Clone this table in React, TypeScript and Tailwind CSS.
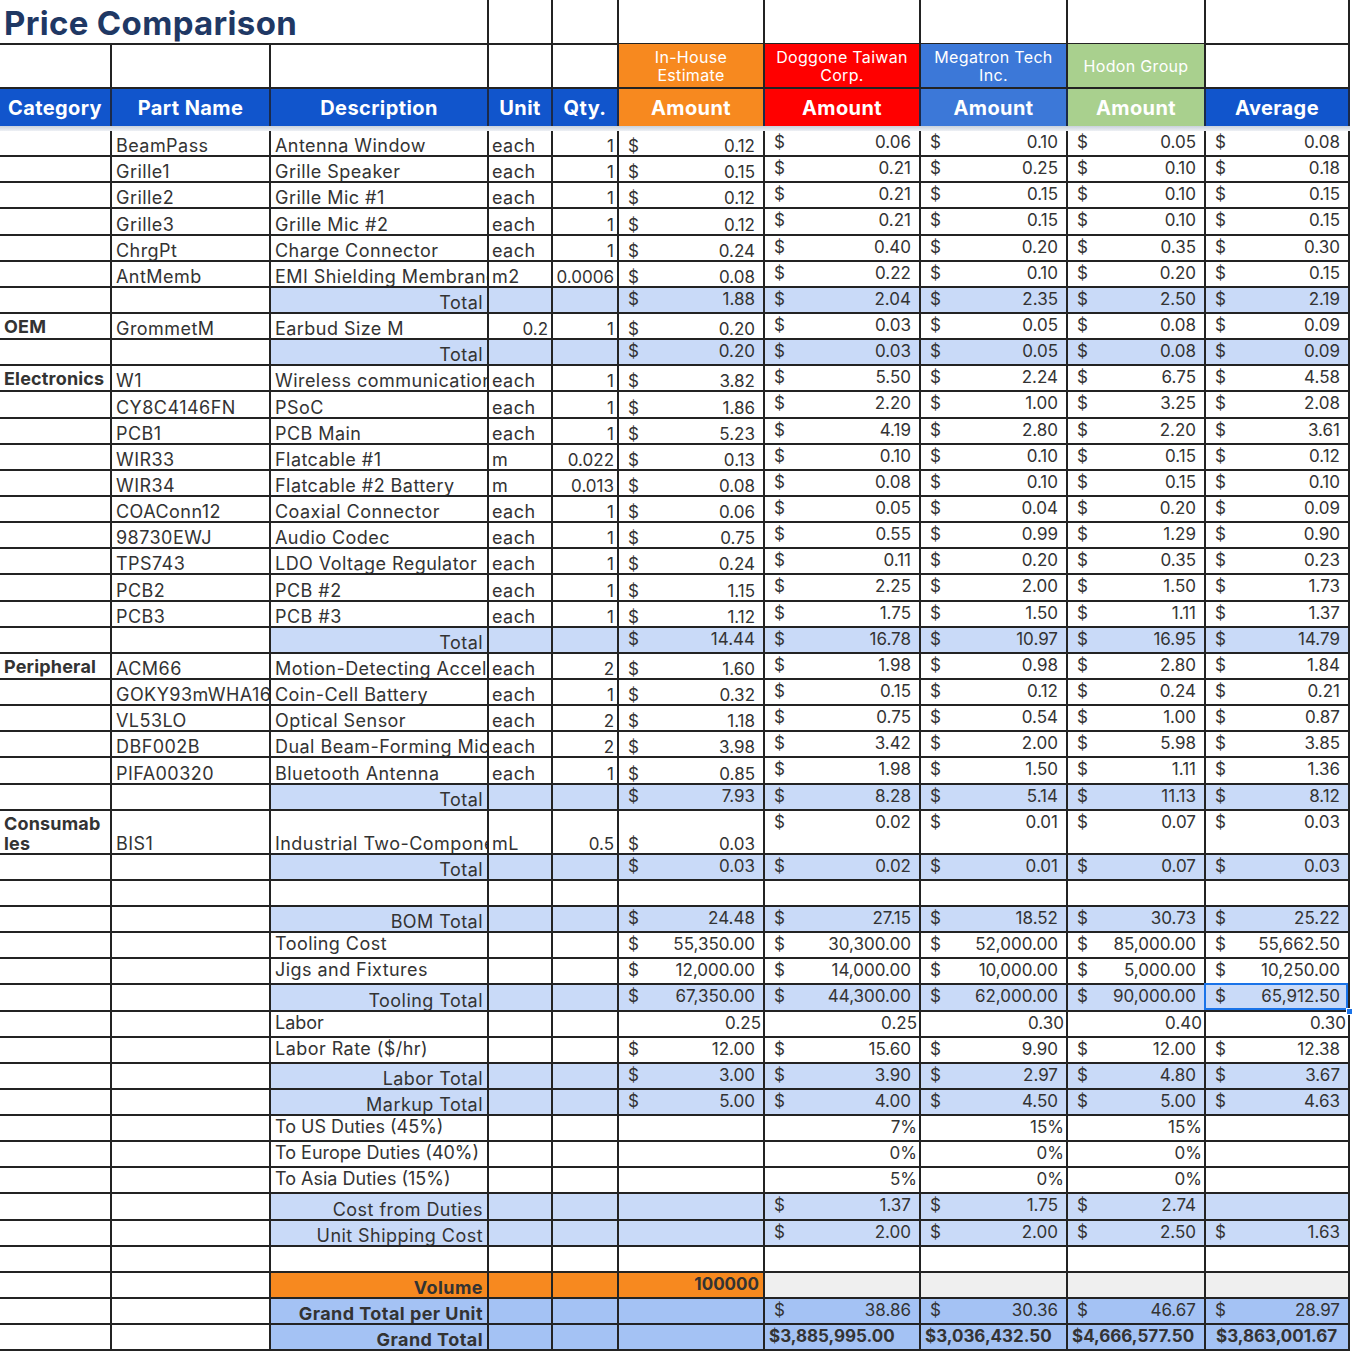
import React from 'react';

const GRID =
  'grid grid-cols-[112px_159px_218px_64px_66px_146px_156px_147px_138px_144px] w-[1350px]';

const B = 'border-r-2 border-b-2 border-[#232323]';
const BASE = 'leading-[18px] text-[#333]';
const TX = 'text-[18px] tracking-[0.025em]';
const TX0 = 'text-[18px] tracking-[0em]';
const NUM = 'text-[17px]';
const TOP = 'items-start pt-[2px]';
const BOT = 'items-end pb-0';

const LIGHT = 'bg-[#c9daf8]';
const GT = 'bg-[#a4c2f4]';
const ORANGE = 'bg-[#f7891f]';

type Row =
  | { k: 'data'; cat?: string; part: string; desc: string; unit: string; unitRight?: boolean; qty: string; v: string[]; tall?: boolean }
  | { k: 'total'; label: string; v: string[] }
  | { k: 'blank' }
  | { k: 'plain'; label: string; v: string[] }
  | { k: 'num'; label: string; v: string[] }
  | { k: 'volume' }
  | { k: 'gtu'; v: string[] }
  | { k: 'gt'; v: string[] };

const rows: Row[] = [
  { k: 'data', part: 'BeamPass', desc: 'Antenna Window', unit: 'each', qty: '1', v: ['0.12', '0.06', '0.10', '0.05', '0.08'] },
  { k: 'data', part: 'Grille1', desc: 'Grille Speaker', unit: 'each', qty: '1', v: ['0.15', '0.21', '0.25', '0.10', '0.18'] },
  { k: 'data', part: 'Grille2', desc: 'Grille Mic #1', unit: 'each', qty: '1', v: ['0.12', '0.21', '0.15', '0.10', '0.15'] },
  { k: 'data', part: 'Grille3', desc: 'Grille Mic #2', unit: 'each', qty: '1', v: ['0.12', '0.21', '0.15', '0.10', '0.15'] },
  { k: 'data', part: 'ChrgPt', desc: 'Charge Connector', unit: 'each', qty: '1', v: ['0.24', '0.40', '0.20', '0.35', '0.30'] },
  { k: 'data', part: 'AntMemb', desc: 'EMI Shielding Membrane', unit: 'm2', qty: '0.0006', v: ['0.08', '0.22', '0.10', '0.20', '0.15'] },
  { k: 'total', label: 'Total', v: ['1.88', '2.04', '2.35', '2.50', '2.19'] },
  { k: 'data', cat: 'OEM', part: 'GrommetM', desc: 'Earbud Size M', unit: '0.2', unitRight: true, qty: '1', v: ['0.20', '0.03', '0.05', '0.08', '0.09'] },
  { k: 'total', label: 'Total', v: ['0.20', '0.03', '0.05', '0.08', '0.09'] },
  { k: 'data', cat: 'Electronics', part: 'W1', desc: 'Wireless communication', unit: 'each', qty: '1', v: ['3.82', '5.50', '2.24', '6.75', '4.58'] },
  { k: 'data', part: 'CY8C4146FN', desc: 'PSoC', unit: 'each', qty: '1', v: ['1.86', '2.20', '1.00', '3.25', '2.08'] },
  { k: 'data', part: 'PCB1', desc: 'PCB Main', unit: 'each', qty: '1', v: ['5.23', '4.19', '2.80', '2.20', '3.61'] },
  { k: 'data', part: 'WIR33', desc: 'Flatcable #1', unit: 'm', qty: '0.022', v: ['0.13', '0.10', '0.10', '0.15', '0.12'] },
  { k: 'data', part: 'WIR34', desc: 'Flatcable #2 Battery', unit: 'm', qty: '0.013', v: ['0.08', '0.08', '0.10', '0.15', '0.10'] },
  { k: 'data', part: 'COAConn12', desc: 'Coaxial Connector', unit: 'each', qty: '1', v: ['0.06', '0.05', '0.04', '0.20', '0.09'] },
  { k: 'data', part: '98730EWJ', desc: 'Audio Codec', unit: 'each', qty: '1', v: ['0.75', '0.55', '0.99', '1.29', '0.90'] },
  { k: 'data', part: 'TPS743', desc: 'LDO Voltage Regulator', unit: 'each', qty: '1', v: ['0.24', '0.11', '0.20', '0.35', '0.23'] },
  { k: 'data', part: 'PCB2', desc: 'PCB #2', unit: 'each', qty: '1', v: ['1.15', '2.25', '2.00', '1.50', '1.73'] },
  { k: 'data', part: 'PCB3', desc: 'PCB #3', unit: 'each', qty: '1', v: ['1.12', '1.75', '1.50', '1.11', '1.37'] },
  { k: 'total', label: 'Total', v: ['14.44', '16.78', '10.97', '16.95', '14.79'] },
  { k: 'data', cat: 'Peripheral', part: 'ACM66', desc: 'Motion-Detecting Accelerometer', unit: 'each', qty: '2', v: ['1.60', '1.98', '0.98', '2.80', '1.84'] },
  { k: 'data', part: 'GOKY93mWHA16C', desc: 'Coin-Cell Battery', unit: 'each', qty: '1', v: ['0.32', '0.15', '0.12', '0.24', '0.21'] },
  { k: 'data', part: 'VL53LO', desc: 'Optical Sensor', unit: 'each', qty: '2', v: ['1.18', '0.75', '0.54', '1.00', '0.87'] },
  { k: 'data', part: 'DBF002B', desc: 'Dual Beam-Forming Mic', unit: 'each', qty: '2', v: ['3.98', '3.42', '2.00', '5.98', '3.85'] },
  { k: 'data', part: 'PIFA00320', desc: 'Bluetooth Antenna', unit: 'each', qty: '1', v: ['0.85', '1.98', '1.50', '1.11', '1.36'] },
  { k: 'total', label: 'Total', v: ['7.93', '8.28', '5.14', '11.13', '8.12'] },
  { k: 'data', cat: 'Consumables', part: 'BIS1', desc: 'Industrial Two-Component Adhesive', unit: 'mL', qty: '0.5', v: ['0.03', '0.02', '0.01', '0.07', '0.03'], tall: true },
  { k: 'total', label: 'Total', v: ['0.03', '0.02', '0.01', '0.07', '0.03'] },
  { k: 'blank' },
  { k: 'total', label: 'BOM Total', v: ['24.48', '27.15', '18.52', '30.73', '25.22'] },
  { k: 'plain', label: 'Tooling Cost', v: ['55,350.00', '30,300.00', '52,000.00', '85,000.00', '55,662.50'] },
  { k: 'plain', label: 'Jigs and Fixtures', v: ['12,000.00', '14,000.00', '10,000.00', '5,000.00', '10,250.00'] },
  { k: 'total', label: 'Tooling Total', v: ['67,350.00', '44,300.00', '62,000.00', '90,000.00', '65,912.50'] },
  { k: 'num', label: 'Labor', v: ['0.25', '0.25', '0.30', '0.40', '0.30'] },
  { k: 'plain', label: 'Labor Rate ($/hr)', v: ['12.00', '15.60', '9.90', '12.00', '12.38'] },
  { k: 'total', label: 'Labor Total', v: ['3.00', '3.90', '2.97', '4.80', '3.67'] },
  { k: 'total', label: 'Markup Total', v: ['5.00', '4.00', '4.50', '5.00', '4.63'] },
  { k: 'num', label: 'To US Duties (45%)', v: ['', '7%', '15%', '15%', ''] },
  { k: 'num', label: 'To Europe Duties (40%)', v: ['', '0%', '0%', '0%', ''] },
  { k: 'num', label: 'To Asia Duties (15%)', v: ['', '5%', '0%', '0%', ''] },
  { k: 'total', label: 'Cost from Duties', v: ['', '1.37', '1.75', '2.74', ''] },
  { k: 'total', label: 'Unit Shipping Cost', v: ['', '2.00', '2.00', '2.50', '1.63'] },
  { k: 'blank' },
  { k: 'volume' },
  { k: 'gtu', v: ['', '38.86', '30.36', '46.67', '28.97'] },
  { k: 'gt', v: ['', '$3,885,995.00', '$3,036,432.50', '$4,666,577.50', '$3,863,001.67'] },
];

function Money({ v, valign, bg = '', selected = false }: { v: string; valign: 'top' | 'bottom'; bg?: string; selected?: boolean }) {
  return (
    <div className={`relative flex ${valign === 'top' ? TOP : BOT} ${B} ${bg} ${BASE} ${NUM}`}>
      {v !== '' && (
        <div className="flex w-full justify-between pl-[9px] pr-[8px]">
          <span>$</span>
          <span>{v}</span>
        </div>
      )}
      {selected && (
        <>
          <div className="absolute -left-[2px] -top-[2px] right-0 bottom-0 border-2 border-[#1a73e8]" />
          <div className="absolute -right-[5px] -bottom-[5px] w-[7px] h-[7px] bg-[#1a73e8] border border-white" />
        </>
      )}
    </div>
  );
}

function Cell({ children, cls = '' }: { children?: React.ReactNode; cls?: string }) {
  return <div className={`flex overflow-hidden whitespace-nowrap ${B} ${BASE} ${cls}`}>{children}</div>;
}

function renderRow(r: Row, i: number) {
  const h = 'h-[26.15px]';
  if (r.k === 'data') {
    const rh = r.tall ? 'h-[44px]' : h;
    return (
      <div key={i} className={`${GRID} ${rh}`}>
        <Cell cls={`items-start pt-[3px] pl-[4px] font-bold text-[#222] text-[18px] tracking-[0.01em] leading-[20px]`}>
          {r.cat === 'Consumables' ? (
            <span>
              Consumab
              <br />
              les
            </span>
          ) : (
            r.cat
          )}
        </Cell>
        <Cell cls={`${BOT} ${TX} pl-[4px]`}>{r.part}</Cell>
        <Cell cls={`${BOT} ${TX} pl-[4px]`}>{r.desc}</Cell>
        <Cell cls={`${BOT} ${r.unitRight ? `${NUM} justify-end pr-[3px]` : `${TX} pl-[3px]`}`}>{r.unit}</Cell>
        <Cell cls={`${BOT} ${NUM} justify-end pr-[3px]`}>{r.qty}</Cell>
        <Money v={r.v[0]} valign="bottom" />
        {r.v.slice(1).map((x, j) => (
          <Money key={j} v={x} valign="top" />
        ))}
      </div>
    );
  }
  if (r.k === 'total') {
    return (
      <div key={i} className={`${GRID} ${h}`}>
        <Cell />
        <Cell />
        <Cell cls={`${BOT} ${TX} justify-end pr-[4px] ${LIGHT}`}>{r.label}</Cell>
        <Cell cls={LIGHT} />
        <Cell cls={LIGHT} />
        {r.v.map((x, j) => (
          <Money key={j} v={x} valign="top" bg={LIGHT} selected={r.label === 'Tooling Total' && j === 4} />
        ))}
      </div>
    );
  }
  if (r.k === 'blank') {
    return (
      <div key={i} className={`${GRID} ${h}`}>
        {Array.from({ length: 10 }).map((_, j) => (
          <Cell key={j} />
        ))}
      </div>
    );
  }
  if (r.k === 'plain') {
    return (
      <div key={i} className={`${GRID} ${h}`}>
        <Cell />
        <Cell />
        <Cell cls={`${TOP} ${TX} pl-[4px]`}>{r.label}</Cell>
        <Cell />
        <Cell />
        {r.v.map((x, j) => (
          <Money key={j} v={x} valign="top" />
        ))}
      </div>
    );
  }
  if (r.k === 'num') {
    return (
      <div key={i} className={`${GRID} ${h}`}>
        <Cell />
        <Cell />
        <Cell cls={`${TOP} ${TX0} pl-[4px]`}>{r.label}</Cell>
        <Cell />
        <Cell />
        {r.v.map((x, j) => (
          <Cell key={j} cls={`${TOP} ${NUM} justify-end pr-[2px]`}>
            {x}
          </Cell>
        ))}
      </div>
    );
  }
  if (r.k === 'volume') {
    return (
      <div key={i} className={`${GRID} ${h}`}>
        <Cell />
        <Cell />
        <Cell cls={`${BOT} ${TX} justify-end pr-[4px] font-bold text-[#222] ${ORANGE}`}>Volume</Cell>
        <Cell cls={ORANGE} />
        <Cell cls={ORANGE} />
        <Cell cls={`${TOP} ${NUM} justify-end pr-[4px] font-bold text-[#222] ${ORANGE}`}>100000</Cell>
        <Cell cls="bg-[#efefef]" />
        <Cell cls="bg-[#efefef]" />
        <Cell cls="bg-[#efefef]" />
        <Cell cls="bg-[#efefef]" />
      </div>
    );
  }
  if (r.k === 'gtu') {
    return (
      <div key={i} className={`${GRID} ${h}`}>
        <Cell />
        <Cell />
        <Cell cls={`${BOT} ${TX} justify-end pr-[4px] font-bold text-[#333] ${GT}`}>Grand Total per Unit</Cell>
        <Cell cls={GT} />
        <Cell cls={GT} />
        {r.v.map((x, j) => (
          <Money key={j} v={x} valign="top" bg={GT} />
        ))}
      </div>
    );
  }
  return (
    <div key={i} className={`${GRID} ${h}`}>
      <Cell />
      <Cell />
      <Cell cls={`${BOT} ${TX} justify-end pr-[4px] font-bold text-[#333] ${GT}`}>Grand Total</Cell>
      <Cell cls={GT} />
      <Cell cls={GT} />
      <Cell cls={GT} />
      {r.v.slice(1).map((x, j) => (
        <Cell key={j} cls={`${TOP} ${NUM} ${GT} font-bold text-[#222] ${j === 3 ? 'pl-[10px]' : 'pl-[4px]'}`}>
          {x}
        </Cell>
      ))}
    </div>
  );
}

export default function App() {
  const vendor = 'flex items-center justify-center text-center text-white text-[16px] tracking-[0.02em] leading-[18px]';
  const h2 = 'flex items-center justify-center text-white font-bold text-[20px] tracking-[0.02em] border-r-2 border-[#1b2a4a]';
  return (
    <div className="w-[1354px] h-[1356px] bg-white overflow-hidden font-['Inter',sans-serif]">
      <div className={`${GRID} h-[44px]`}>
        <div className={`col-span-3 flex items-center pl-[4px] pt-[3px] ${B}`}>
          <span className="text-[33px] font-bold text-[#1f3864] tracking-[0.01em] leading-[40px]">Price Comparison</span>
        </div>
        {Array.from({ length: 7 }).map((_, j) => (
          <div key={j} className={B} />
        ))}
      </div>
      <div className={`${GRID} h-[45px]`}>
        <div className={B} />
        <div className={B} />
        <div className={B} />
        <div className={B} />
        <div className={B} />
        <div className={`${vendor} ${B} bg-[#f7891f]`}>
          In-House
          <br />
          Estimate
        </div>
        <div className={`${vendor} ${B} bg-[#ff0000]`}>
          Doggone Taiwan
          <br />
          Corp.
        </div>
        <div className={`${vendor} ${B} bg-[#3c78d8]`}>
          Megatron Tech
          <br />
          Inc.
        </div>
        <div className={`${vendor} ${B} bg-[#a9d08e]`}>Hodon Group</div>
        <div className={B} />
      </div>
      <div className={`${GRID} h-[37px]`}>
        <div className={`${h2} bg-[#1155cc]`}>Category</div>
        <div className={`${h2} bg-[#1155cc]`}>Part Name</div>
        <div className={`${h2} bg-[#1155cc]`}>Description</div>
        <div className={`${h2} bg-[#1155cc]`}>Unit</div>
        <div className={`${h2} bg-[#1155cc]`}>Qty.</div>
        <div className={`${h2} bg-[#f7891f]`}>Amount</div>
        <div className={`${h2} bg-[#ff0000]`}>Amount</div>
        <div className={`${h2} bg-[#3c78d8]`}>Amount</div>
        <div className={`${h2} bg-[#a9d08e]`}>Amount</div>
        <div className={`${h2} bg-[#1155cc]`}>Average</div>
      </div>
      <div className="h-[5px] w-[1350px] bg-gradient-to-b from-[#c9d1dc] to-[#eef1f5]" />
      {rows.map(renderRow)}
    </div>
  );
}
